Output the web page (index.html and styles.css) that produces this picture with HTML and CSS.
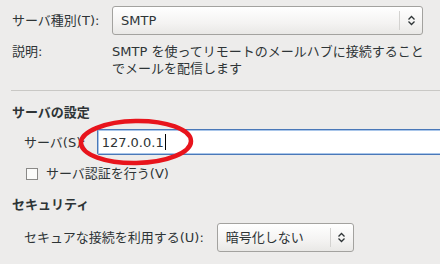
FILE: index.html
```html
<!DOCTYPE html>
<html lang="ja">
    <head>
        <meta charset="UTF-8">
        <title>サーバの設定</title>
        <link rel="stylesheet" href="styles.css">
    </head>
    <body>
        <div class="dialog">
            <div class="row top">
                <span class="label wide">サーバ種別(T):</span>
                <div class="combo smtp">
                    <span class="combo-text">SMTP</span>
                    <span class="combo-arrow">
                        <svg width="9" height="13" viewBox="0 0 9 13"><path d="M1.5 5.5 L4.5 2.5 L7.5 5.5 M1.5 7.5 L4.5 10.5 L7.5 7.5" fill="none" stroke="#2e3436" stroke-width="1.3"/></svg>
                    </span>
                </div>
            </div>
            <div class="row desc">
                <span class="label wide">説明:</span>
                <p class="desc-text">SMTP を使ってリモートのメールハブに接続すること<br>でメールを配信します</p>
            </div>
            <hr class="sep">
            <h2 class="section">サーバの設定</h2>
            <div class="row server">
                <span class="label">サーバ(S):</span>
                <div class="entry">127.0.0.1<span class="caret"></span></div>
                <svg class="mark" width="124" height="54" viewBox="0 0 124 54"><ellipse cx="62" cy="27" rx="55" ry="21" fill="none" stroke="#e8141c" stroke-width="4.5" transform="rotate(-1 62 27)"/></svg>
            </div>
            <label class="check">
                <span class="box"></span>
                <span>サーバ認証を行う(V)</span>
            </label>
            <h2 class="section security">セキュリティ</h2>
            <div class="row secure">
                <span class="label">セキュアな接続を利用する(U):</span>
                <div class="combo crypt">
                    <span class="combo-text">暗号化しない</span>
                    <span class="combo-arrow">
                        <svg width="9" height="13" viewBox="0 0 9 13"><path d="M1.5 5.5 L4.5 2.5 L7.5 5.5 M1.5 7.5 L4.5 10.5 L7.5 7.5" fill="none" stroke="#2e3436" stroke-width="1.3"/></svg>
                    </span>
                </div>
            </div>
        </div>
    </body>
</html>
```
FILE: styles.css
```css
html, body {
    margin: 0;
    padding: 0;
    height: 100%;
}

body {
    overflow: hidden;
    background-color: #edeceb;
    color: #2e3436;
    font-family: "DejaVu Sans", "Noto Sans CJK JP", sans-serif;
    font-size: 13px;
    line-height: 17px;
}

.dialog {
    padding: 6px 0 0 12px;
}

.row {
    display: flex;
    align-items: center;
}

.label {
    white-space: nowrap;
}

.label.wide {
    width: 100px;
    flex: none;
}

.combo {
    display: flex;
    align-items: center;
    box-sizing: border-box;
    height: 29px;
    border: 1px solid #a3a29f;
    border-radius: 3px;
    background: linear-gradient(#ffffff, #f4f3f2 60%, #e9e8e6);
}

.combo-text {
    flex: 1;
    padding-left: 8px;
    white-space: nowrap;
}

.combo-arrow {
    display: flex;
    align-items: center;
    justify-content: center;
    height: 19px;
    width: 22px;
    border-left: 1px solid #d3d2d0;
}

.smtp {
    width: 311px;
}

.crypt {
    width: 137px;
    margin-left: 13px;
}

.desc {
    align-items: flex-start;
    margin-top: 8px;
}

.desc-text {
    margin: 0;
    white-space: nowrap;
}

.sep {
    height: 1px;
    margin: 13px 0 0 -1px;
    border: 0;
    background-color: #c9c8c5;
}

.section {
    margin: 13px 0 0;
    font-size: 13px;
    line-height: 17px;
    font-weight: bold;
}

.server {
    position: relative;
    margin-top: 8px;
    padding-left: 12px;
}

.entry {
    display: flex;
    align-items: center;
    box-sizing: border-box;
    flex: 1;
    height: 26px;
    margin-left: 11px;
    margin-right: -6px;
    padding-left: 4px;
    border: 1px solid #4a78b8;
    border-radius: 2px;
    box-shadow: inset 0 0 0 1px #a9c6ea;
    background-color: #fff;
}

.caret {
    width: 1px;
    height: 16px;
    margin-left: 1px;
    background-color: #000;
}

.mark {
    position: absolute;
    left: 62px;
    top: -14px;
}

.check {
    display: flex;
    align-items: center;
    margin-top: 10px;
    padding-left: 14px;
}

.box {
    box-sizing: border-box;
    width: 12px;
    height: 12px;
    margin-right: 8px;
    border: 1px solid #8a8987;
    background-color: #fbfbfa;
}

.security {
    margin-top: 14px;
}

.secure {
    margin-top: 10px;
    padding-left: 12px;
}
```
